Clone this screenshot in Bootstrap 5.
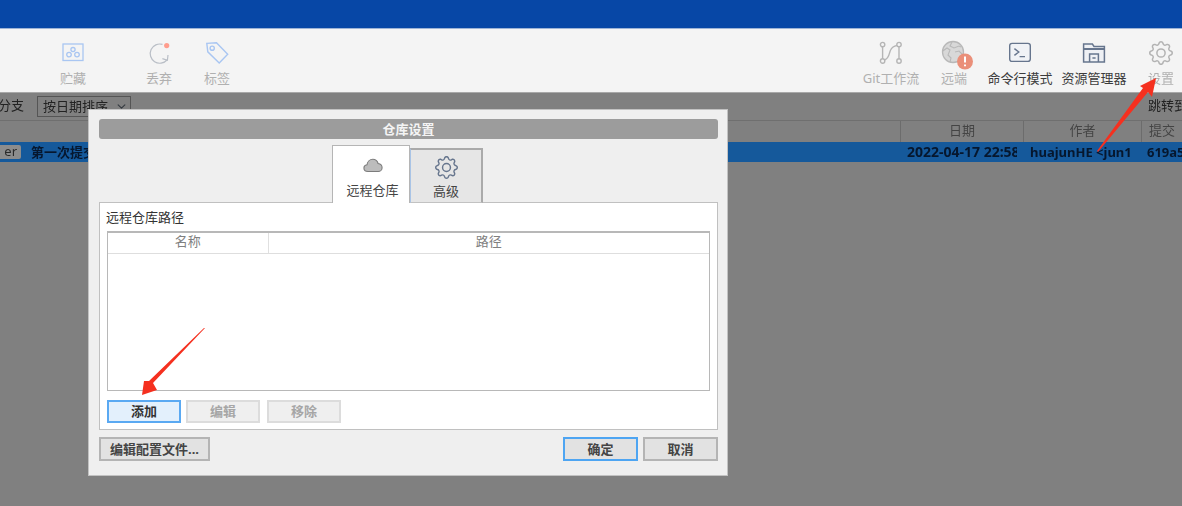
<!DOCTYPE html>
<html lang="zh-CN">
<head>
    <meta charset="UTF-8">
    <meta name="viewport" content="width=device-width, initial-scale=1.0">
    <title>仓库设置</title>
    <link href="https://cdn.jsdelivr.net/npm/bootstrap@5.3.0/dist/css/bootstrap.min.css" rel="stylesheet">
    <style>
        html, body { height: 100%; }
        body {
            position: relative;
            overflow: hidden;
            background: #808080;
            font-family: "Noto Sans", "Noto Sans CJK SC", sans-serif;
            font-size: 13px;
            line-height: 18px;
            color: #333;
            filter: blur(.35px);
        }
        .title-strip { height: 29px; background: #0747a6; border-bottom: 1px solid #9db4d6; }
        .tool-strip { height: 64px; background: #f4f4f4; border-bottom: 1px solid #a8a8a8; }
        .tool-item { height: 63px; padding-top: 12px; flex: none; text-align: center; color: #b0b0b0; white-space: nowrap; }
        .tool-item svg { display: block; margin: 0 auto 4px; width: 24px; height: 24px; }
        .tool-item.on { color: #3c3c3c; }
        .w-stash { width: 64px; margin-left: 41px; }
        .w-discard { width: 60px; margin-left: 24px; }
        .w-tag { width: 52px; margin-left: 2px; }
        .w-git { width: 66px; }
        .w-remote { width: 56px; margin-left: 2px; }
        .w-term { width: 68px; margin-left: 4px; }
        .w-expl { width: 70px; margin-left: 5px; }
        .w-gear { width: 42px; margin-left: 11px; }

        .filter-strip { height: 27px; padding-top: 3px; color: #222; }
        .filter-strip .form-select {
            width: 94px; height: 21px; margin-left: 13px; padding: 0 0 0 5px;
            font-size: 13px; line-height: 19px; color: #222;
            background-color: transparent; background-position: right 3px center; background-size: 11px 9px;
            border: 1px solid #555; border-radius: 0;
        }
        .cut-label { margin-left: -2px; }
        .jump-label { width: 34px; overflow: hidden; white-space: nowrap; }

        .log-head { height: 22px; border-top: 1px solid #6f6f6f; color: #444; text-align: center; }
        .log-head > div, .log-row > div { flex: none; overflow: hidden; white-space: nowrap; }
        .log-head > div + div { border-left: 1px solid #6c6c6c; }
        .c-msg { width: 900px; }
        .c-date { width: 123px; }
        .c-author { width: 118px; }
        .c-hash { width: 41px; }
        .log-row { height: 20px; background: #15599b; color: #06172e; font-weight: 700; line-height: 20px; }
        .log-row .c-date { padding-left: 7px; font-size: 14px; border-right: 6px solid #15599b; }
        .log-row .c-author { padding-left: 7px; border-right: 7px solid #15599b; }
        .log-row .c-hash { padding-left: 6px; }
        .ref-tag {
            display: inline-block; width: 21px; height: 14px; margin-right: 10px; vertical-align: 1px;
            padding-right: 4px; line-height: 13px; font-weight: 400; text-align: right;
            background: #8c8c8c; color: #2a2a2a; border-radius: 0 2px 2px 0;
        }

        .repo-dialog {
            position: absolute; left: 88px; top: 109px; width: 640px; height: 367px;
            background: #efefef; border: 1px solid #c2c2c2; border-radius: 0; padding: 9px 9px 10px 10px;
        }
        .dlg-title {
            height: 20px; background: #9c9c9c; color: #f4f4f4; border-radius: 3px;
            text-align: center; font-size: 13px; font-weight: 700; line-height: 20px;
        }
        .dlg-tabs {
            height: 58px; margin-top: 6px; margin-bottom: -1px; padding-right: 2px;
            border: 0; justify-content: center; align-items: flex-end; position: relative; z-index: 1;
        }
        .dlg-tabs .nav-link {
            margin: 0; border-radius: 0; color: #444; text-align: center; font-size: 13px; line-height: 18px;
        }
        .dlg-tabs .tab-one {
            width: 78px; height: 58px; padding: 12px 0 0 3px;
            background: #fff; border: 1px solid #b5b5b5; border-bottom: 0;
        }
        .dlg-tabs .tab-one svg { display: block; margin: 0 auto 8px; }
        .dlg-tabs .tab-two {
            width: 73px; height: 55px; padding: 6px 0 0;
            background: #e6e6e6; border: 2px solid #aaa; border-left: 1px solid #a9c4e6; border-bottom: 1px solid #c2c2c2;
        }
        .dlg-tabs .tab-two svg { display: block; margin: 0 auto 3px; }
        .dlg-panel { height: 228px; background: #fff; border: 1px solid #c0c0c0; padding: 5px 7px 7px; }
        .panel-label { height: 23px; line-height: 18px; margin-left: -1px; color: #333; }
        .repo-table-wrap { height: 160px; border: 1px solid #b8b8b8; border-top-width: 2px; background: #fff; }
        .repo-table { table-layout: fixed; margin: 0; font-size: 13px; }
        .repo-table th {
            height: 20px; padding: 0; text-align: center; font-weight: 400; color: #808080; line-height: 17px;
            vertical-align: top; border-bottom: 1px solid #dedede; background: #fff;
        }
        .repo-table th + th { border-left: 1px solid #e0e0e0; }
        .th-name { width: 160px; }

        .dlg-btn {
            width: 74px; height: 23px; padding: 0; font-size: 13px; font-weight: 700; line-height: 19px;
            border-radius: 0; color: #444; background: #e2e2e2; border: 2px solid #b4b4b4;
        }
        .dlg-btn:disabled { opacity: 1; color: #a6a6a6; background: #efefef; border-color: #dcdcdc; }
        .btn-add { background: #e3f0fc; border-color: #5aa9f2; color: #333; }
        .btn-ok { border-color: #4ea5f2; width: 75px; height: 24px; }
        .btn-cancel { width: 75px; height: 24px; }
        .btn-cfg { width: 111px; height: 24px; }
        .foot-right { gap: 5px; }
        .panel-btns { margin-top: 9px; }
        .panel-btns .dlg-btn + .dlg-btn { margin-left: 5px; }
        .panel-btns .dlg-btn:last-child { margin-left: 7px; }
        .dlg-foot { margin-top: 7px; }
        .mark-arrows { position: absolute; left: 0; top: 0; pointer-events: none; z-index: 5; }
    </style>
</head>
<body>
    <svg width="0" height="0" class="d-block">
        <defs>
            <g id="gear-shape">
                <path d="M8 4.754a3.246 3.246 0 1 0 0 6.492 3.246 3.246 0 0 0 0-6.492zM5.754 8a2.246 2.246 0 1 1 4.492 0 2.246 2.246 0 0 1-4.492 0z"/>
                <path d="M9.796 1.343c-.527-1.79-3.065-1.79-3.592 0l-.094.319a.873.873 0 0 1-1.255.52l-.292-.16c-1.64-.892-3.433.902-2.54 2.541l.159.292a.873.873 0 0 1-.52 1.255l-.319.094c-1.79.527-1.79 3.065 0 3.592l.319.094a.873.873 0 0 1 .52 1.255l-.16.292c-.892 1.64.901 3.434 2.541 2.54l.292-.159a.873.873 0 0 1 1.255.52l.094.319c.527 1.79 3.065 1.79 3.592 0l.094-.319a.873.873 0 0 1 1.255-.52l.292.16c1.64.893 3.434-.902 2.54-2.541l-.159-.292a.873.873 0 0 1 .52-1.255l.319-.094c1.79-.527 1.79-3.065 0-3.592l-.319-.094a.873.873 0 0 1-.52-1.255l.16-.292c.893-1.64-.902-3.433-2.541-2.54l-.292.159a.873.873 0 0 1-1.255-.52l-.094-.319zm-2.633.283c.246-.835 1.428-.835 1.674 0l.094.319a1.873 1.873 0 0 0 2.693 1.115l.291-.16c.764-.415 1.6.42 1.184 1.185l-.159.292a1.873 1.873 0 0 0 1.116 2.692l.318.094c.835.246.835 1.428 0 1.674l-.319.094a1.873 1.873 0 0 0-1.115 2.693l.16.291c.415.764-.42 1.6-1.185 1.184l-.291-.159a1.873 1.873 0 0 0-2.693 1.116l-.094.318c-.246.835-1.428.835-1.674 0l-.094-.319a1.873 1.873 0 0 0-2.692-1.115l-.292.16c-.764.415-1.6-.42-1.184-1.185l.159-.291A1.873 1.873 0 0 0 1.945 8.93l-.319-.094c-.835-.246-.835-1.428 0-1.674l.319-.094A1.873 1.873 0 0 0 3.06 4.377l-.16-.292c-.415-.764.42-1.6 1.185-1.184l.292.159a1.873 1.873 0 0 0 2.692-1.115l.094-.319z"/>
            </g>
        </defs>
    </svg>

    <div class="title-strip"></div>

    <div class="tool-strip d-flex justify-content-between">
        <div class="d-flex">
            <div class="tool-item w-stash">
                <svg viewBox="0 0 24 24" fill="none" stroke="#a9c6f2" stroke-width="1.3">
                    <rect x="2" y="3" width="20" height="16.5"/>
                    <circle cx="12" cy="8.6" r="2.1"/><circle cx="8" cy="13.6" r="2.3"/><circle cx="16" cy="13.6" r="2.3"/>
                </svg>
                贮藏
            </div>
            <div class="tool-item w-discard">
                <svg viewBox="0 0 24 24" fill="none" stroke="#b9bec6" stroke-width="1.2">
                    <path d="M15.5 3.4A9.6 9.6 0 1 0 20 19"/>
                    <path d="M15.4 17.6 20.4 19.2 21 14"/>
                    <circle cx="19.7" cy="4.6" r="2.6" fill="#ff9d8d" stroke="none"/>
                </svg>
                丢弃
            </div>
            <div class="tool-item w-tag">
                <svg viewBox="0 0 24 24" fill="none" stroke="#a9c6f2" stroke-width="1.4">
                    <path d="M1.8 2.4 11.5 1.7 22.7 13.2 14.2 22 2.8 10.8Z"/>
                    <circle cx="7.2" cy="7.2" r="2.1"/>
                </svg>
                标签
            </div>
        </div>
        <div class="d-flex">
            <div class="tool-item w-git">
                <svg viewBox="0 0 24 24" fill="none" stroke="#b5b5b5" stroke-width="1.4">
                    <circle cx="3.6" cy="3.6" r="2.2"/><circle cx="3.6" cy="20" r="2.2"/>
                    <circle cx="20" cy="3.6" r="2.2"/><circle cx="20" cy="20" r="2.2"/>
                    <path d="M3.6 5.8V17.8M20 5.8V17.8"/>
                    <path d="M5.6 19C10.5 17 10 12 11.6 9 13 6.2 15.5 5 18 4.4"/>
                </svg>
                Git工作流
            </div>
            <div class="tool-item w-remote">
                <svg viewBox="0 0 24 24" fill="none" stroke="#b8b8b8" stroke-width="1.3" class="overflow-visible">
                    <circle cx="11" cy="11" r="10.5" fill="#d8d8d8"/>
                    <path d="M.8 10 5 7 8 9 6 14 9 17 8 21M10 1 8 5 12 7 17 5 19 6M13 11 17 10 21 14" stroke-width="1.1"/>
                    <circle cx="23" cy="20.5" r="8" fill="#ea8f79" stroke="none"/>
                    <path d="M23 15.5V21.5M23 23.4V25.2" stroke="#fff" stroke-width="2"/>
                </svg>
                远端
            </div>
            <div class="tool-item w-term on">
                <svg viewBox="0 0 24 24" fill="none" stroke="#66758d" stroke-width="1.4">
                    <rect x="1.7" y="2.4" width="20.6" height="18" rx="2.4" fill="#f0f2f6"/>
                    <path d="M6.4 7.6 10.8 11 6.4 14.4M11.6 15.6H17"/>
                </svg>
                命令行模式
            </div>
            <div class="tool-item w-expl on">
                <svg viewBox="0 0 24 24" fill="none" stroke="#66758d" stroke-width="1.5">
                    <path d="M1.6 3H10.4L12 5.4H22.4V21H1.6Z" fill="#eef0f4"/>
                    <path d="M1.6 8H22.4" stroke-width="2"/>
                    <path d="M7.6 21V13H16.4V21M10.4 17H13.6"/>
                </svg>
                资源管理器
            </div>
            <div class="tool-item w-gear">
                <svg viewBox="0 0 16 16" fill="#b3b3b3"><use href="#gear-shape"/></svg>
                设置
            </div>
        </div>
    </div>

    <div class="filter-strip d-flex justify-content-between">
        <div class="d-flex align-items-start">
            <span class="cut-label">分支</span>
            <select class="form-select"><option>按日期排序</option></select>
        </div>
        <div class="jump-label">跳转到</div>
    </div>

    <div class="log-head d-flex">
        <div class="c-msg"></div>
        <div class="c-date">日期</div>
        <div class="c-author">作者</div>
        <div class="c-hash">提交</div>
    </div>
    <div class="log-row d-flex">
        <div class="c-msg"><span class="ref-tag">er</span>第一次提交</div>
        <div class="c-date">2022-04-17 22:58</div>
        <div class="c-author">huajunHE &lt;jun1</div>
        <div class="c-hash">619a5</div>
    </div>

    <div class="card repo-dialog">
        <div class="dlg-title">仓库设置</div>
        <ul class="nav nav-tabs dlg-tabs">
            <li class="nav-item">
                <a class="nav-link tab-one" href="#">
                    <svg width="20" height="15" viewBox="0 0 22 16" fill="#bcbcbc" stroke="#7c7c7c" stroke-width="1.2">
                        <path d="M5.4 14.6C2.8 14.6 1 13 1 10.8 1 8.8 2.5 7.4 4.4 7.2 4.8 3.6 7.6 1.2 10.8 1.2 13.6 1.2 15.8 3 16.6 5.8 19 6.2 21 8 21 10.4 21 12.8 19 14.6 16.8 14.6Z"/>
                    </svg>
                    远程仓库
                </a>
            </li>
            <li class="nav-item">
                <a class="nav-link tab-two" href="#">
                    <svg width="23" height="23" viewBox="0 0 16 16" fill="#66758d"><use href="#gear-shape"/></svg>
                    高级
                </a>
            </li>
        </ul>
        <div class="dlg-panel">
            <div class="panel-label">远程仓库路径</div>
            <div class="repo-table-wrap">
                <table class="table table-borderless repo-table">
                    <thead>
                        <tr><th class="th-name">名称</th><th>路径</th></tr>
                    </thead>
                </table>
            </div>
            <div class="panel-btns d-flex">
                <button class="btn dlg-btn btn-add" type="button">添加</button>
                <button class="btn dlg-btn" type="button" disabled>编辑</button>
                <button class="btn dlg-btn" type="button" disabled>移除</button>
            </div>
        </div>
        <div class="dlg-foot d-flex justify-content-between">
            <button class="btn dlg-btn btn-cfg" type="button">编辑配置文件...</button>
            <div class="d-flex foot-right">
                <button class="btn dlg-btn btn-ok" type="button">确定</button>
                <button class="btn dlg-btn btn-cancel" type="button">取消</button>
            </div>
        </div>
    </div>

    <svg class="mark-arrows" width="1182" height="506" fill="#f5301f">
        <polygon points="1097,151 1143,88 1140,86 1156,78 1152,97 1148,92 1098,152"/>
        <polygon points="205,328 153,383 157,390 142,395 144,381 149,381 204,328"/>
    </svg>

    <script src="https://cdn.jsdelivr.net/npm/bootstrap@5.3.0/dist/js/bootstrap.bundle.min.js"></script>
</body>
</html>
